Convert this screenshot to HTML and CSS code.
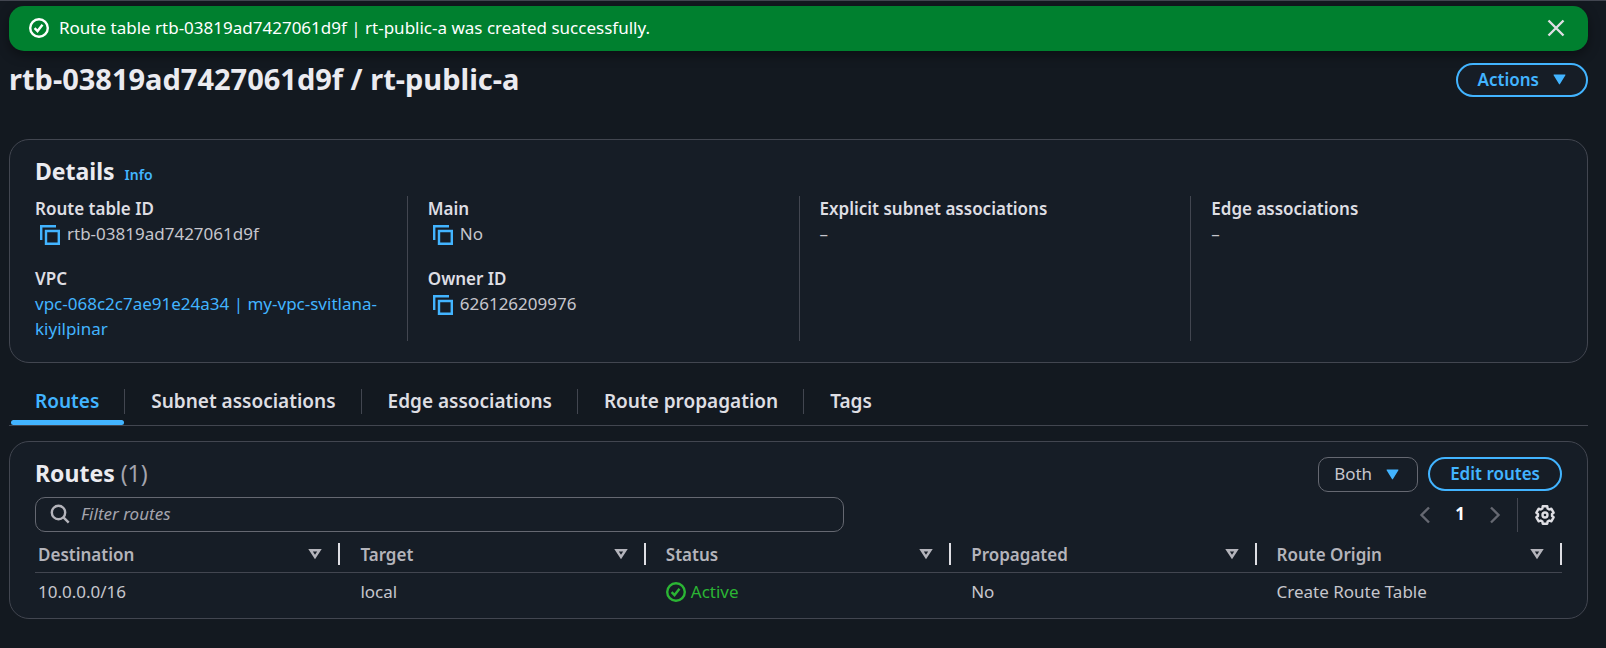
FILE: index.html
```html
<!DOCTYPE html>
<html lang="en">
<head>
<meta charset="utf-8">
<meta name="viewport" content="width=device-width, initial-scale=1">
<title>rtb-03819ad7427061d9f / rt-public-a</title>
<link rel="stylesheet" href="styles.css">
</head>
<body>
<svg class="sprite" aria-hidden="true">
  <symbol id="copy" viewBox="0 0 20 20"><path d="M1.2 15V1.2H16M6 6h12.8v12.8H6z"/></symbol>
  <symbol id="check" viewBox="0 0 20 20"><circle cx="10" cy="10" r="8.8"/><path d="M5.600 10.200l2.900 2.900 5-6.300"/></symbol>
  <symbol id="sort" viewBox="0 0 14 12"><path d="M2.500 2.200h9L7 9z"/></symbol>
  <symbol id="caret" viewBox="0 0 13 11"><path d="M1 .5h11a.5.5 0 0 1 .4.8L7 10a.6.6 0 0 1-1 0L.6 1.300A.5.5 0 0 1 1 .5z"/></symbol>
</svg>

<main class="page">
  <div class="flash" role="status">
    <svg class="icon"><use href="#check"/></svg>
    <p class="flash-text">Route table rtb-03819ad7427061d9f | rt-public-a was created successfully.</p>
    <button class="icon-button" type="button" aria-label="Dismiss">
      <svg class="icon" viewBox="0 0 20 20"><path d="M2.500 2.500l15 15M17.500 2.500l-15 15"/></svg>
    </button>
  </div>

  <header class="page-header">
    <h1>rtb-03819ad7427061d9f / rt-public-a</h1>
    <button class="button" type="button">Actions <svg class="caret"><use href="#caret"/></svg></button>
  </header>

  <section class="card details">
    <div class="card-title">
      <h2>Details</h2>
      <a class="info" href="#info">Info</a>
    </div>
    <div class="columns">
      <dl class="column">
        <div>
          <dt>Route table ID</dt>
          <dd><button class="copy" type="button" aria-label="Copy route table ID"><svg class="icon"><use href="#copy"/></svg></button>rtb-03819ad7427061d9f</dd>
        </div>
        <div>
          <dt>VPC</dt>
          <dd><a href="#vpc">vpc-068c2c7ae91e24a34 | my-vpc-svitlana-kiyilpinar</a></dd>
        </div>
      </dl>
      <dl class="column">
        <div>
          <dt>Main</dt>
          <dd><button class="copy" type="button" aria-label="Copy main"><svg class="icon"><use href="#copy"/></svg></button>No</dd>
        </div>
        <div>
          <dt>Owner ID</dt>
          <dd><button class="copy" type="button" aria-label="Copy owner ID"><svg class="icon"><use href="#copy"/></svg></button>626126209976</dd>
        </div>
      </dl>
      <dl class="column">
        <div><dt>Explicit subnet associations</dt><dd>–</dd></div>
      </dl>
      <dl class="column">
        <div><dt>Edge associations</dt><dd>–</dd></div>
      </dl>
    </div>
  </section>

  <div class="tabs" role="tablist">
    <button class="tab active" type="button" role="tab" aria-selected="true"><span>Routes</span></button>
    <button class="tab" type="button" role="tab"><span>Subnet associations</span></button>
    <button class="tab" type="button" role="tab"><span>Edge associations</span></button>
    <button class="tab" type="button" role="tab"><span>Route propagation</span></button>
    <button class="tab" type="button" role="tab"><span>Tags</span></button>
  </div>

  <section class="card routes">
    <div class="routes-header">
      <h2>Routes <span class="count">(1)</span></h2>
      <div class="actions">
        <div class="select">
          <select aria-label="Route view"><option>Both</option></select>
          <svg class="caret"><use href="#caret"/></svg>
        </div>
        <button class="button" type="button">Edit routes</button>
      </div>
    </div>
    <div class="toolbar">
      <label class="filter">
        <svg class="icon" viewBox="0 0 20 20"><circle cx="8.500" cy="8.500" r="6.700"/><path d="M13.200 13.200l5.500 5.500"/></svg>
        <input type="text" placeholder="Filter routes" aria-label="Filter routes">
      </label>
      <div class="pager">
        <button class="icon-button arrow" type="button" aria-label="Previous page"><svg class="icon" viewBox="0 0 20 20"><path d="M14 2.500L6.500 10l7.500 7.500"/></svg></button>
        <button class="icon-button number" type="button">1</button>
        <button class="icon-button arrow" type="button" aria-label="Next page"><svg class="icon" viewBox="0 0 20 20"><path d="M6 2.500l7.500 7.500L6 17.500"/></svg></button>
        <div class="settings">
          <button class="icon-button" type="button" aria-label="Preferences"><svg class="icon gear" viewBox="0 0 20 20"><path d="M7.700 1.300h4.600l.3 2.200 1.700 1 2-.8 2.300 4-1.600 1.300v2l1.600 1.300-2.300 4-2-.8-1.700 1-.3 2.200H7.700l-.3-2.200-1.700-1-2 .8-2.300-4L3 11V9L1.400 7.700l2.300-4 2 .8 1.700-1z"/><circle cx="10" cy="10" r="2.500"/></svg></button>
        </div>
      </div>
    </div>
    <table>
      <thead>
        <tr>
          <th scope="col"><div class="head">Destination<svg class="sort"><use href="#sort"/></svg></div></th>
          <th scope="col"><div class="head">Target<svg class="sort"><use href="#sort"/></svg></div></th>
          <th scope="col"><div class="head">Status<svg class="sort"><use href="#sort"/></svg></div></th>
          <th scope="col"><div class="head">Propagated<svg class="sort"><use href="#sort"/></svg></div></th>
          <th scope="col"><div class="head">Route Origin<svg class="sort"><use href="#sort"/></svg></div></th>
        </tr>
      </thead>
      <tbody>
        <tr>
          <td>10.0.0.0/16</td>
          <td>local</td>
          <td><span class="status"><svg class="icon"><use href="#check"/></svg>Active</span></td>
          <td>No</td>
          <td>Create Route Table</td>
        </tr>
      </tbody>
    </table>
  </section>
</main>
</body>
</html>
```
FILE: styles.css
```css
:root {
  --page: #131920;
  --card: #161d26;
  --line: #424650;
  --control: #656871;
  --text: #c6c6cd;
  --strong: #dedee3;
  --heading: #ebebf0;
  --muted: #b4b4bb;
  --blue: #42b4ff;
}

* { box-sizing: border-box; }

body {
  margin: 0;
  min-height: 100vh;
  border-top: 1px solid var(--line);
  background: var(--page);
  color: var(--text);
  font: 17px/25px "Noto Sans", "Open Sans", sans-serif;
}

h1, h2, p, dl, dd { margin: 0; }
h1, h2 { color: var(--heading); font-weight: 700; }
a { color: var(--blue); text-decoration: none; }
button, input, select { font: inherit; }

.sprite { position: absolute; width: 0; height: 0; }

.icon, .sort {
  flex: none;
  width: 20px;
  height: 20px;
  fill: none;
  stroke: currentColor;
  stroke-width: 2.4;
}
.gear { stroke-linejoin: round; }
.sort { width: 14px; height: 12px; }
.caret { flex: none; width: 13px; height: 11px; fill: var(--blue); }

.page { padding: 5px 18px 28px 9px; }

.icon-button {
  display: flex;
  padding: 0;
  border: 0;
  background: none;
  color: inherit;
}

.flash {
  display: flex;
  align-items: center;
  gap: 10px;
  padding: 9px 22px 11px 20px;
  border-radius: 15px;
  background: #00802f;
  color: #fff;
  box-shadow: 0 4px 12px #0006;
}
.flash-text { flex: 1; }
.flash .icon-button { color: var(--strong); }

.page-header {
  display: flex;
  align-items: flex-start;
  justify-content: space-between;
  padding: 12px 0 42px;
}
h1 { font-size: 29px; line-height: 32px; }

.button {
  display: flex;
  align-items: center;
  gap: 14px;
  height: 34px;
  padding: 0 20px 2px;
  border: 2px solid var(--blue);
  border-radius: 17px;
  background: var(--card);
  color: var(--blue);
  font-weight: 600;
}

.card {
  padding: 15px 25px 14px;
  border: 1px solid var(--line);
  border-radius: 20px;
  background: var(--card);
}
h2 { font-size: 23px; line-height: 32px; }

.details { padding-bottom: 21px; }
.card-title { display: flex; align-items: baseline; gap: 10px; padding-bottom: 9px; }
.info { font-size: 14px; font-weight: 600; }

.columns {
  display: grid;
  grid-template-columns: repeat(4, minmax(0, 1fr));
  gap: 40px;
}
.column { display: flex; flex-direction: column; gap: 20px; }
.column + .column {
  margin-left: -20px;
  padding-left: 20px;
  border-left: 1px solid var(--line);
}
dt { color: var(--strong); font-weight: 600; }
.copy {
  display: inline-flex;
  margin: 0 7px 0 5px;
  padding: 0;
  border: 0;
  background: none;
  color: var(--blue);
  vertical-align: -5px;
}

.tabs {
  display: flex;
  gap: 2px;
  margin-top: 20px;
  padding-left: 2px;
  border-bottom: 1px solid var(--line);
}
.tab {
  padding: 0;
  border: 0;
  background: none;
  color: var(--strong);
  font-size: 19px;
  font-weight: 600;
}
.tab span { display: block; margin: 6px 0; padding: 0 25px 0 24px; border-right: 1px solid var(--line); }
.tab:last-child span { border-right: 0; }
.tab::after { content: ""; display: block; height: 5px; margin-right: 1px; border-radius: 3px; }
.tab.active { color: var(--blue); }
.tab.active::after { background: var(--blue); }

.routes { margin-top: 15px; }
.routes-header { display: flex; align-items: flex-start; justify-content: space-between; }
.count { color: #a4a4ad; font-weight: 400; }
.actions { display: flex; gap: 10px; }
.select { display: grid; align-items: center; }
.select > * { grid-area: 1 / 1; }
.select .caret { justify-self: end; margin-right: 19px; pointer-events: none; }
select {
  height: 35px;
  width: 100px;
  padding: 0 15px 2px;
  border: 1px solid var(--control);
  border-radius: 10px;
  appearance: none;
  background: var(--card);
  color: var(--text);
}

.toolbar { display: flex; align-items: center; justify-content: space-between; padding-top: 5px; }
.filter {
  display: flex;
  align-items: center;
  gap: 11px;
  width: 53%;
  height: 35px;
  padding: 0 15px 1px 14px;
  border: 1px solid var(--control);
  border-radius: 10px;
  color: var(--muted);
}
input {
  flex: 1;
  min-width: 0;
  padding: 0 0 2px;
  border: 0;
  outline: 0;
  background: none;
  color: var(--text);
}
input::placeholder { color: #a4a4ad; font-style: italic; opacity: 1; }

.pager { display: flex; align-items: center; }
.arrow { color: var(--control); }
.number { padding: 0 20px 2px; color: #fff; font-weight: 700; }
.settings { margin-left: 12px; padding: 7px 7px 7px 17px; border-left: 1px solid var(--line); color: var(--strong); }

table { width: 100%; border-collapse: collapse; table-layout: fixed; }
th, td { padding: 0 0 0 20px; text-align: left; font-weight: 400; }
th:first-child, td:first-child { padding-left: 3px; }
th { padding-top: 11px; padding-bottom: 7px; border-bottom: 1px solid var(--line); }
.head {
  display: flex;
  align-items: center;
  justify-content: space-between;
  height: 22px;
  padding-right: 16px;
  border-right: 2px solid var(--strong);
  color: var(--muted);
  font-weight: 600;
}
td { padding-top: 6px; }
.status { display: flex; align-items: center; gap: 5px; color: #2bb534; }
```
